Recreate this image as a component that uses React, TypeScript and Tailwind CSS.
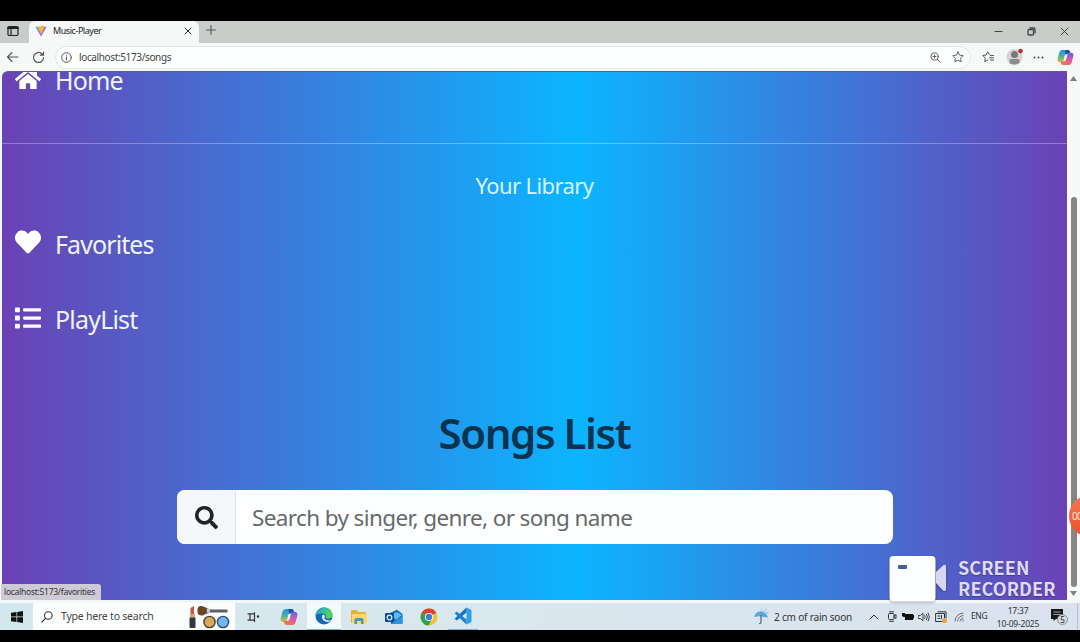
import React from "react";
import { FaHome, FaHeart, FaList, FaSearch } from "react-icons/fa";

type IconProps = { className?: string };

const Copilot = ({ className }: IconProps) => (
  <svg viewBox="0 0 18 18" className={className}>
    <defs>
      <linearGradient id="cpA" x1="0.3" y1="0" x2="0.3" y2="1">
        <stop offset="0" stopColor="#2b8fe8" />
        <stop offset="0.5" stopColor="#45b09c" />
        <stop offset="1" stopColor="#e8b83a" />
      </linearGradient>
      <linearGradient id="cpB" x1="0.6" y1="0" x2="0.3" y2="1">
        <stop offset="0" stopColor="#7a5be0" />
        <stop offset="0.5" stopColor="#dc5aa8" />
        <stop offset="1" stopColor="#f47a45" />
      </linearGradient>
    </defs>
    <path d="M5.500 1H11.500Q13.300 1 13.700 3L14.200 5H10.500Q9 5 8.400 7L7 12Q6.500 14 4.700 14H3Q0 14 .7 10.500L2.500 3.500Q3.200 1 5.500 1z" fill="url(#cpA)" />
    <path d="M12.500 17H6.500Q4.700 17 4.300 15L3.800 13H7.500Q9 13 9.600 11L11 6Q11.500 4 13.300 4H15Q18 4 17.300 7.500L15.500 14.500Q14.800 17 12.500 17z" fill="url(#cpB)" />
    <path d="M8.500 1H11.500Q13.300 1 13.700 3L14 4.100H13Q11.500 4 11 5.500H9z" fill="#1c4fb4" />
    <path d="M8.300 6.500H10.200L9.200 11Q8.900 12 8 12H7.300z" fill="#eef3f5" />
  </svg>
);

const ViteLogo = () => (
  <svg viewBox="0 0 12 12" className="h-3 w-3">
    <defs>
      <linearGradient id="vt" x1="0" y1="0" x2="1" y2="0.8">
        <stop offset="0" stopColor="#41b6f5" />
        <stop offset="0.8" stopColor="#a04ff0" />
      </linearGradient>
    </defs>
    <path d="M0.300 1.500 6 11.500 11.700 1.500 6.500 2.500z" fill="url(#vt)" />
    <path d="M3 1.600 9.500 .8 8.500 4.200 6 10 5 6.500 4 5.500z" fill="#f7b52b" />
  </svg>
);

const line = { fill: "none", stroke: "currentColor", strokeLinecap: "round", strokeLinejoin: "round" } as const;

function TabStrip() {
  return (
    <div className="flex h-[22px] shrink-0 items-stretch bg-[#c9cdca] text-[#222]">
      <div className="flex w-[29px] items-center pl-[7px]">
        <svg viewBox="0 0 12 12" className="-mt-[3px] h-3 w-3" {...line} strokeWidth="1.2">
          <rect x="1" y="1.500" width="10" height="9" rx="1.200" />
          <path d="M1 3h10" strokeWidth="2" />
          <path d="M4 4v6" />
        </svg>
      </div>
      <div className="flex w-[170px] items-center rounded-t-md bg-[#f5f8f6] pb-[3px] pl-[6px] pr-[7px]">
        <ViteLogo />
        <span className="ml-[6px] grow text-[9px] leading-none tracking-[-0.450px] text-[#222]">Music-Player</span>
        <svg viewBox="0 0 8 8" className="h-2 w-2" {...line} strokeWidth="1">
          <path d="M1 1l6 6M7 1L1 7" />
        </svg>
      </div>
      <div className="flex grow items-center pl-[7px] text-[#555]">
        <svg viewBox="0 0 10 10" className="-mt-1 h-[10px] w-[10px]" {...line} strokeWidth="1.100">
          <path d="M5 .5v9M.5 5h9" />
        </svg>
      </div>
      <div className="flex items-center gap-[24px] pb-[2px] pr-[11px] text-[#444]">
        <svg viewBox="0 0 9 9" className="h-[9px] w-[9px]" {...line} strokeWidth="1.100">
          <path d="M1 4.500h7" />
        </svg>
        <svg viewBox="0 0 9 9" className="h-[9px] w-[9px]" {...line} strokeWidth="1.300">
          <rect x="1" y="2.500" width="5.500" height="5.500" rx="1" />
          <path d="M3 1h3.500Q8 1 8 2.500V6" />
        </svg>
        <svg viewBox="0 0 9 9" className="h-[9px] w-[9px]" {...line} strokeWidth="1">
          <path d="M1 1l7 7M8 1L1 8" />
        </svg>
      </div>
    </div>
  );
}

function AddressBar() {
  return (
    <div className="flex h-[28px] shrink-0 items-center bg-[#f5f8f6] pl-[6px] pr-[6px] text-[#555]">
      <svg viewBox="0 0 13 12" className="h-3 w-[13px]" {...line} strokeWidth="1.100">
        <path d="M6 1.500 1.500 6 6 10.500M1.500 6H12" />
      </svg>
      <svg viewBox="0 0 13 13" className="ml-[13px] h-[13px] w-[13px]" {...line} strokeWidth="1.200">
        <path d="M11.500 6.500a5 5 0 1 1-1.700-3.800L11.300 4M11.500 1v3.200H8.300" />
      </svg>
      <div className="ml-[10px] flex h-[23px] w-[916px] items-center rounded-full border border-[#e3e6e4] bg-[#fdfffe] pl-[5px] pr-[6px]">
        <svg viewBox="0 0 11 11" className="h-[11px] w-[11px]" {...line} strokeWidth="1">
          <circle cx="5.500" cy="5.500" r="4.800" />
          <path d="M5.500 5v3M5.500 3v.2" />
        </svg>
        <span className="ml-[7px] grow text-[10px] leading-none tracking-[-0.370px] text-[#444]">localhost:5173/songs</span>
        <svg viewBox="0 0 11 11" className="h-[11px] w-[11px]" {...line} strokeWidth=".9">
          <circle cx="4.500" cy="4.500" r="3.700" />
          <path d="M7.300 7.300 10.300 10.300M3 4.500h3M4.500 3v3" />
        </svg>
        <svg viewBox="0 0 12 12" className="ml-[11px] h-3 w-3" {...line} strokeWidth=".9">
          <path d="M6 .8 7.600 4.100l3.600.5-2.600 2.600.6 3.600L6 9.100l-3.200 1.700.6-3.600L.8 4.600l3.600-.5z" />
        </svg>
      </div>
      <svg viewBox="0 0 12 12" className="ml-[11px] h-3 w-3" {...line} strokeWidth="1">
        <path d="M7.500 3.800 5.500.8 4.200 4 .8 4.500l2.500 2.600-.6 3.600L5.800 9M8.500 4.500h3M7.500 6.800h4M8.500 9h3" />
      </svg>
      <svg viewBox="0 0 18 18" className="ml-[12px] h-[18px] w-[18px]">
        <circle cx="8.500" cy="9" r="8" fill="#d2d4d3" />
        <circle cx="8.500" cy="6.500" r="3.500" fill="#777" />
        <path d="M3.500 15V12.500Q3.500 11 5 11h7q1.500 0 1.500 1.500V15q-5 3-10 0z" fill="#8b8b8b" />
        <circle cx="14.500" cy="3" r="2.300" fill="#c52a2a" />
      </svg>
      <svg viewBox="0 0 11 3" className="ml-[9px] h-[3px] w-[11px]" fill="#444">
        <circle cx="1.500" cy="1.500" r="1" />
        <circle cx="5.500" cy="1.500" r="1" />
        <circle cx="9.500" cy="1.500" r="1" />
      </svg>
      <Copilot className="ml-[13px] h-[17px] w-[17px] shrink-0" />
    </div>
  );
}

function Page() {
  return (
    <main className="flex w-[1065px] flex-col overflow-hidden rounded-tl-md border-t border-[#4c5fa8] bg-[linear-gradient(90deg,#6a42b5_0%,#0bb5ff_54%,#6a42b5_100%)] text-[#eef4ff]">
      <div className="flex h-[72px] shrink-0 border-b border-white/30 pl-[13px]">
        <FaHome className="-mt-[6px] h-[26px] w-[26px] text-white" />
        <span className="-mt-[7px] ml-[14px] text-[25px] leading-[30px] tracking-[-0.85px]">Home</span>
      </div>
      <p className="mt-[27px] text-center text-[22px] leading-[28px] tracking-[-0.6px] text-[#d8f6ff]">Your Library</p>
      <div className="mt-[30px] flex h-[30px] items-center pl-[13px]">
        <FaHeart className="-mt-[4px] h-[26px] w-[26px] text-white" />
        <span className="ml-[14px] text-[25px] leading-[30px] tracking-[-0.9px]">Favorites</span>
      </div>
      <div className="mt-[45px] flex h-[30px] items-center pl-[13px]">
        <FaList className="-mt-[3px] h-[26px] w-[26px] text-white" />
        <span className="ml-[14px] text-[25px] leading-[30px] tracking-[-0.8px]">PlayList</span>
      </div>
      <h1 className="mt-[72px] text-center text-[42px] font-semibold leading-[54px] tracking-[-1.450px] text-[#0a3350]">Songs List</h1>
      <div className="ml-[175px] mt-[30px] flex h-[54px] w-[716px] shrink-0 overflow-hidden rounded-[8px] bg-[#fcfffe]">
        <div className="flex w-[59px] items-center justify-center border-r border-[#dfe4e8] bg-[#f5f8f8]">
          <FaSearch className="h-[23px] w-[23px] text-[#212529]" />
        </div>
        <span className="ml-[16px] text-[22.500px] leading-[56px] tracking-[-0.620px] text-[#666a6c]">Search by singer, genre, or song name</span>
      </div>
    </main>
  );
}

function Scrollbar() {
  return (
    <div className="flex w-[13px] flex-col items-center bg-[#f8faf9]">
      <svg viewBox="0 0 7 5" className="mt-[5px] h-[5px] w-[7px]" fill="#808080">
        <path d="M3.500 0 7 5H0z" />
      </svg>
      <div className="mt-[116px] h-[390px] w-[6px] rounded-full bg-[#858585]" />
      <svg viewBox="0 0 7 5" className="mt-[4px] h-[5px] w-[7px]" fill="#808080">
        <path d="M3.500 5 0 0h7z" />
      </svg>
    </div>
  );
}

function RecorderMark() {
  return (
    <div className="absolute left-[889px] top-[555px] flex">
      <svg viewBox="0 0 58 48" className="h-12 w-[58px] drop-shadow-[0_1px_1px_rgba(0,0,0,0.35)]">
        <path d="M47 17 54 10.500Q57 8.500 57 12v22q0 3-3 1.500L47 28z" fill="#d9d6f2" />
        <rect x="0.500" y="1" width="46" height="45.500" rx="4" fill="#fdfffe" />
        <rect x="9" y="10" width="9" height="4" rx="1" fill="#3f5fa8" />
      </svg>
      <div className="ml-[11px] mt-[2px] font-['Noto_Sans_CJK_SC','Noto_Sans',sans-serif] text-[18px] font-bold leading-[21px] tracking-[0.100px] text-[#dedbf6] [text-shadow:0_1px_1px_rgba(0,0,0,0.3)]">
        <div>SCREEN</div>
        <div>RECORDER</div>
      </div>
    </div>
  );
}

function TaskIcons() {
  return (
    <div className="flex items-center">
      <div className="flex w-[36px] justify-center text-[#333]">
        <svg viewBox="0 0 13 12" className="h-3 w-[13px]" {...line} strokeWidth="1.200">
          <path d="M1 2.800h6.500M1 9.200h6.500M3 2.800v6.400M7.500 1.500v9" />
          <circle cx="11" cy="5.500" r=".6" />
        </svg>
      </div>
      <div className="flex w-[36px] justify-center">
        <Copilot className="h-[18px] w-[18px]" />
      </div>
      <div className="flex h-[27px] w-[34px] items-center justify-center border-b border-[#7ab2dc] bg-[#f3fafb]">
        <svg viewBox="0 0 18 18" className="h-[18px] w-[18px]">
          <defs>
            <linearGradient id="eg" x1="0" y1="0" x2="1" y2="0.3">
              <stop offset="0" stopColor="#1b9de0" />
              <stop offset="1" stopColor="#5bd35b" />
            </linearGradient>
          </defs>
          <circle cx="9" cy="9" r="8.500" fill="#1466b8" />
          <path d="M.5 8.500C1 4 4.500.5 9.300.5c5 0 8.200 3.500 8.200 7 0 3-2 4.300-4.500 4.300-2 0-2.800-.6-2.500-1.200.9-1.200.6-4.100-2.500-4.100-3 0-6 .5-7.500 2z" fill="url(#eg)" />
          <path d="M8 7.500c-2 2-1 6.500 3.500 7.300 2 .3 3.500-.2 4.800-1-1-1-3 .3-5.600-1-1.500-.8-2-2.300-.7-3.300 0-1-.9-2-2-2z" fill="#e8f7ff" />
        </svg>
      </div>
      <div className="flex w-[35px] justify-center">
        <svg viewBox="0 0 16 16" className="h-4 w-4">
          <path d="M0 2q0-1 1-1h5l1.500 2H14q1 0 1 1v10H0z" fill="#e8b13a" />
          <path d="M1 5h15v9.500H1z" fill="#fbd86b" />
          <path d="M3.500 15v-4.500q0-1.500 1.500-1.500h6q1.500 0 1.500 1.500V15H10v-3H6v3z" fill="#4a98b8" />
        </svg>
      </div>
      <div className="flex w-[35px] justify-center">
        <svg viewBox="0 0 18 16" className="h-4 w-[18px]">
          <path d="M5 4 12 .8 17.500 5v9q0 1-1 1H6z" fill="#1769ba" />
          <path d="M6 5.500 12 3l5 3-6 5z" fill="#5ebcf0" />
          <path d="M6 15l11.500-8v7q0 1-1 1z" fill="#2f94df" />
          <rect x="0" y="4" width="9" height="9" rx="1" fill="#0e4f96" />
          <circle cx="4.500" cy="8.500" r="2.300" fill="none" stroke="#d7efff" strokeWidth="1.300" />
        </svg>
      </div>
      <div className="flex w-[35px] justify-center">
        <svg viewBox="0 0 18 18" className="h-[18px] w-[18px]">
          <circle cx="9" cy="9" r="8.500" fill="#f0c330" />
          <path d="M9 9 1.600 4.800A8.500 8.500 0 0 1 16.400 4.800z" fill="#dc4335" />
          <path d="M9 9 1.600 4.800A8.500 8.500 0 0 0 8.500 17.500L12 11z" fill="#2fa04f" />
          <path d="M3 4.800h13.400H9z" fill="#dc4335" />
          <circle cx="9" cy="9" r="4.100" fill="#fff" />
          <circle cx="9" cy="9" r="3.200" fill="#3b7de0" />
        </svg>
      </div>
      <div className="ml-[2px] flex h-[27px] w-[30px] items-center justify-center border-b border-[#7ab2dc]">
        <svg viewBox="0 0 18 18" className="h-[18px] w-[18px]">
          <path d="M12.500.5 17.500 3v12l-5 2.500z" fill="#2f9fe8" />
          <path d="M12.500.5v5L2.800 13.500.5 11.800z" fill="#1472bf" />
          <path d="M12.500 17.500v-5L2.800 4.500.5 6.200z" fill="#1b83d0" />
        </svg>
      </div>
    </div>
  );
}

function Tray() {
  return (
    <div className="flex h-full items-center text-[#333]">
      <svg viewBox="0 0 16 16" className="h-4 w-4">
        <circle cx="10.500" cy="5" r="3.500" fill="#a9d8f5" />
        <path d="M1 8Q3 2 8 2.500q5.500.5 7 6Q8 6.500 1 8z" fill="#5ba6da" />
        <path d="M8 6v7q0 2-2 1.500" fill="none" stroke="#46677f" strokeWidth="1.200" />
        <path d="M12 1l1-1M14 4l1.500-.5M8 1V0" stroke="#6fb5e0" />
      </svg>
      <span className="ml-[5px] w-[79px] whitespace-nowrap text-[10px] leading-none tracking-[-0.180px]">2 cm of rain soon</span>
      <svg viewBox="0 0 10 6" className="ml-[16px] h-[6px] w-[10px]" {...line} strokeWidth="1">
        <path d="M1 5l4-4 4 4" />
      </svg>
      <svg viewBox="0 0 10 11" className="ml-[8px] h-[11px] w-[10px]" {...line} strokeWidth="1">
        <rect x="1.500" y="2.500" width="5.500" height="6" rx="1" />
        <path d="M2.500.8h4M2.500 10.300h4M7 5l2-1.500v4L7 6" />
      </svg>
      <svg viewBox="0 0 12 8" className="ml-[5px] h-2 w-3" fill="#111">
        <path d="M0 0h3v1h8v1h1v3.500h-1V7H3V4H1.500L0 3z" />
      </svg>
      <svg viewBox="0 0 12 10" className="ml-[4px] h-[10px] w-3" {...line} strokeWidth=".9">
        <path d="M.6 3.500h1.800L5 1.200v7.600L2.400 6.500H.6zM6.800 3.500q1 1.500 0 3M8.500 2.200q2 2.800 0 5.600M10.200 1q2.500 4 0 8" />
      </svg>
      <svg viewBox="0 0 12 12" className="ml-[5px] h-3 w-3" {...line} strokeWidth="1">
        <path d="M1 2.500h8.500v8H1zM3 .8h8V7M3 5h2M3 7.500h2M6.500 4.500v3" />
        <circle cx="9.500" cy="9.500" r="2.500" fill="#eda437" stroke="none" />
      </svg>
      <svg viewBox="0 0 10 10" className="ml-[7px] h-[10px] w-[10px]" {...line} strokeWidth=".9" opacity=".75">
        <path d="M1 9Q1.500 2 9 1M3.500 9Q4 4.500 9 3.500M6 9q.5-2.500 3-3M9 8v1" />
      </svg>
      <span className="ml-[7px] w-[17px] text-[8.500px] leading-none tracking-[-0.400px]">ENG</span>
      <div className="ml-[8px] w-[44px] whitespace-nowrap text-center text-[8.500px] leading-[13px] tracking-[-0.200px]">
        <div>17:37</div>
        <div>10-09-2025</div>
      </div>
      <svg viewBox="0 0 18 18" className="ml-[11px] mr-[8px] h-[18px] w-[18px]">
        <path d="M0 1h12v10H5l-2.500 2v-2H0z" fill="#171a1c" />
        <path d="M2.500 4h7M2.500 6.500h7" stroke="#9aa2a8" />
        <circle cx="11.500" cy="11.500" r="5" fill="#d5dadd" stroke="#777" strokeWidth=".7" />
        <text x="11.500" y="14.500" textAnchor="middle" fontSize="8" fill="#222">5</text>
      </svg>
      <div className="h-full w-px bg-[#b8c2ca]" />
      <div className="w-[2px]" />
    </div>
  );
}

function Taskbar() {
  return (
    <div className="flex h-[27px] shrink-0 items-center bg-[linear-gradient(90deg,#d3e7ee_0%,#d9e8ee_40%,#dae2ef_100%)]">
      <div className="flex w-[33px] justify-center">
        <svg viewBox="0 0 12 12" className="h-3 w-3" fill="#111">
          <path d="M0 1.800 5.500 1v4.600H0zM6.200.9 12 0v5.600H6.200zM0 6.300h5.500V11L0 10.200zM6.200 6.300H12V12l-5.800-.9z" />
        </svg>
      </div>
      <div className="flex h-full w-[202px] items-center bg-[#fbfefd] pl-[8px]">
        <svg viewBox="0 0 12 12" className="h-3 w-3 text-[#333]" {...line} strokeWidth="1.100">
          <circle cx="7.300" cy="4.500" r="3.800" />
          <path d="M4.500 7.300.8 11" />
        </svg>
        <span className="ml-[8px] w-[128px] whitespace-nowrap text-[10.500px] leading-none tracking-[-0.220px] text-[#444]">Type here to search</span>
        <svg viewBox="0 0 41 24" className="h-6 w-[41px]">
          <path d="M1.500 3 5 1v8H1.500z" fill="#c9544a" />
          <rect x="1" y="9" width="5" height="4" fill="#cda77a" />
          <rect x="0.500" y="12.500" width="6" height="10.500" rx="1" fill="#303845" />
          <path d="M8.500 4Q9 .5 13 1l5 2v5l-4 2.500q-5 .5-5.500-3z" fill="#6c4424" />
          <path d="M17 3 22 4.500h16.500v3H22L17 9z" fill="#59606a" />
          <path d="M18 3.800h3v4h-3z" fill="#c9ccd0" />
          <circle cx="20.500" cy="17" r="6.300" fill="#4b4234" />
          <circle cx="20.500" cy="17" r="4.900" fill="#d6a85b" />
          <circle cx="34" cy="17" r="6.300" fill="#324c68" />
          <circle cx="34" cy="17" r="4.900" fill="#70b8ef" />
        </svg>
      </div>
      <TaskIcons />
      <div className="grow" />
      <Tray />
    </div>
  );
}

export default function App() {
  return (
    <div className="relative flex h-[642px] w-[1080px] flex-col overflow-hidden bg-black pt-[21px] font-['Noto_Sans','Open_Sans',sans-serif]">
      <TabStrip />
      <AddressBar />
      <div className="flex h-[529px] shrink-0 bg-[#f5f8f6] pl-[2px]">
        <Page />
        <Scrollbar />
      </div>
      <div className="h-[3px] shrink-0 bg-[#f2f7fa]" />
      <Taskbar />
      <div className="absolute left-px top-[584px] flex h-[16px] w-[100px] items-center rounded-tr-[3px] bg-[#cfcbd6] pl-[3px] text-[8.500px] leading-none tracking-[-0.270px] text-[#333]">
        localhost:5173/favorities
      </div>
      <RecorderMark />
      <div className="absolute left-[1069px] top-[495px] flex h-[42px] w-[42px] items-center rounded-full bg-[linear-gradient(#f47a50,#ee4f28)] pl-[3px] text-[10px] tracking-[-0.600px] text-[#ffe3d8]">
        00
      </div>
    </div>
  );
}
